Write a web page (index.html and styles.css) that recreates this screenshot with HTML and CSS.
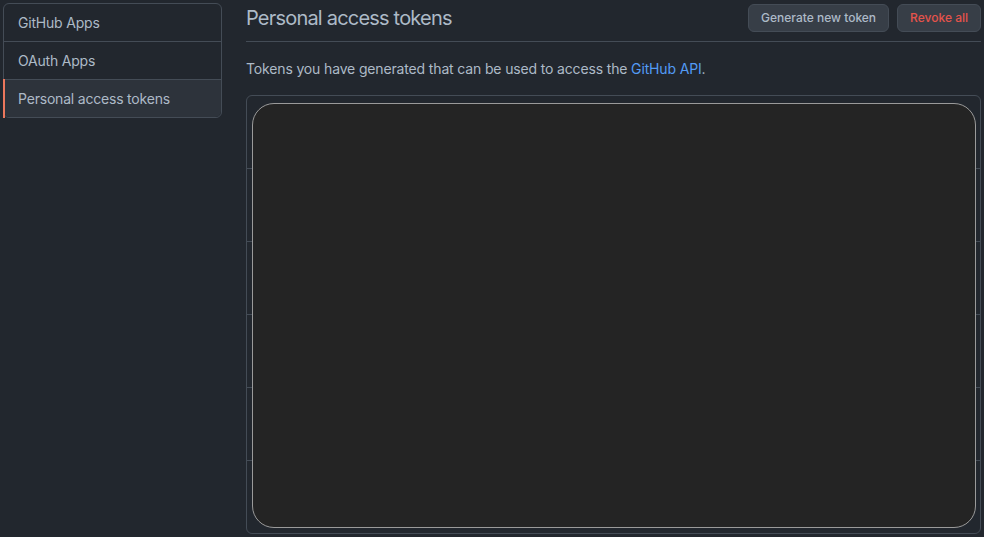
FILE: index.html
```html
<!DOCTYPE html>
<html lang="en">
<head>
<meta charset="utf-8">
<title>Personal access tokens</title>
<link rel="stylesheet" href="styles.css">
</head>
<body>
<div class="layout">
  <nav class="menu">
    <a class="menu-item" href="#">GitHub Apps</a>
    <a class="menu-item" href="#">OAuth Apps</a>
    <a class="menu-item selected" href="#">Personal access tokens</a>
  </nav>
  <main class="main">
    <div class="subhead">
      <h2 class="subhead-heading">Personal access tokens</h2>
      <div class="actions">
        <a class="btn" href="#">Generate new token</a>
        <a class="btn btn-danger" href="#">Revoke all</a>
      </div>
    </div>
    <p class="intro">Tokens you have generated that can be used to access the <a class="link" href="#">GitHub API</a>.</p>
    <div class="box">
      <div class="row"></div>
      <div class="row"></div>
      <div class="row"></div>
      <div class="row"></div>
      <div class="row"></div>
      <div class="row"></div>
      <div class="overlay"></div>
    </div>
  </main>
</div>
</body>
</html>
```
FILE: styles.css
```css
html, body {
  margin: 0;
  padding: 0;
  background: #22272e;
  color: #adbac7;
  font-family: Inter, "Liberation Sans", Arial, sans-serif;
  font-size: 14px;
}
a { text-decoration: none; }

.layout {
  display: flex;
  align-items: flex-start;
  padding: 3px 3px 0 3px;
  gap: 24px;
}

.menu {
  width: 217px;
  border: 1px solid #444c56;
  border-radius: 6px;
  flex-shrink: 0;
}
.menu-item {
  position: relative;
  display: block;
  height: 37px;
  line-height: 37px;
  padding-left: 14px;
  color: #adbac7;
  font-size: 14px;
  letter-spacing: -0.2px;
  border-top: 1px solid #444c56;
}
.menu-item:first-child { border-top: 0; }
.menu-item.selected {
  background: #2d333b;
  border-radius: 0 0 6px 6px;
}
.menu-item.selected::before {
  content: "";
  position: absolute;
  left: -1px;
  top: -1px;
  bottom: -1px;
  width: 2px;
  background: #ec775c;
}

.main {
  flex: 1;
  min-width: 0;
}
.subhead {
  display: flex;
  align-items: flex-start;
  justify-content: space-between;
  padding-bottom: 8px;
  border-bottom: 1px solid #444c56;
}
.subhead-heading {
  margin: 0;
  font-size: 20px;
  font-weight: 400;
  line-height: 30px;
  letter-spacing: -0.8px;
  color: #adbac7;
}
.actions {
  display: flex;
  gap: 8px;
  margin-top: 1px;
}
.btn {
  display: block;
  height: 26px;
  line-height: 26px;
  padding: 0 12px;
  font-size: 12px;
  font-weight: 500;
  color: #adbac7;
  background: #373e47;
  border: 1px solid #444c56;
  border-radius: 6px;
}
.btn-danger { color: #e5534b; }

.intro {
  margin: 16px 0;
  line-height: 21px;
  letter-spacing: -0.15px;
}
.link { color: #539bf5; }

.box {
  position: relative;
  border: 1px solid #444c56;
  border-radius: 6px;
}
.row {
  height: 72px;
  border-top: 1px solid #444c56;
}
.row:first-child { border-top: 0; }
.overlay {
  position: absolute;
  top: 7px;
  left: 5px;
  right: 4px;
  bottom: 5px;
  background: #242424;
  border: 1px solid #9a9a9a;
  border-radius: 22px;
}
```
